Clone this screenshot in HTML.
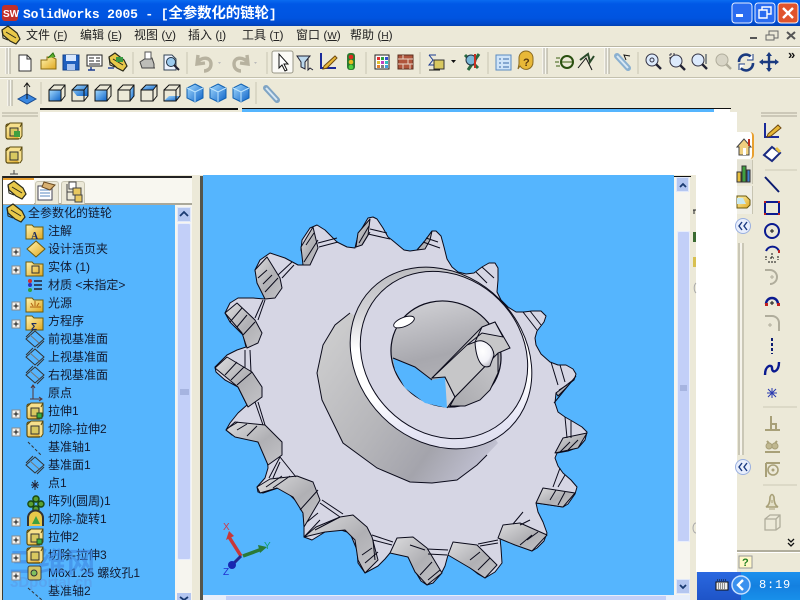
<!DOCTYPE html>
<html lang="zh"><head><meta charset="utf-8"><title>SolidWorks 2005</title>
<style>
html,body{margin:0;padding:0;width:800px;height:600px;overflow:hidden;background:#ece9d8}
body{position:relative;font-family:"Liberation Sans","WenQuanYi Zen Hei","Noto Sans CJK SC",sans-serif}
.a{position:absolute}
.t{position:absolute;font-size:12px;line-height:14px;white-space:nowrap;color:#121a30;font-family:"Liberation Sans","WenQuanYi Zen Hei","Noto Sans CJK SC",sans-serif}
.m{position:absolute;top:28px;font-size:12px;line-height:14px;color:#222;white-space:nowrap;font-family:"Liberation Sans","WenQuanYi Zen Hei","Noto Sans CJK SC",sans-serif}
.m u{font-size:10px}
</style></head><body>

<!-- title bar -->
<div class="a" style="left:0;top:0;width:800px;height:26px;background:linear-gradient(#0a6cf0 0,#0058e6 4px,#0054e0 18px,#0048c8 24px,#0040b0 26px)"></div>
<div class="a" style="left:23px;top:4px;color:#fff;font:bold 13px/17px 'Liberation Mono','WenQuanYi Zen Hei',monospace;letter-spacing:-.15px;white-space:nowrap">SolidWorks 2005 - [<span style="font-family:'WenQuanYi Zen Hei','Noto Sans CJK SC',sans-serif;font-size:14.500px">全参数化的链轮</span>]</div>

<!-- menu -->
<div class="m" style="left:26px">文件 (<u>F</u>)</div>
<div class="m" style="left:80px">编辑 (<u>E</u>)</div>
<div class="m" style="left:134px">视图 (<u>V</u>)</div>
<div class="m" style="left:188px">插入 (<u>I</u>)</div>
<div class="m" style="left:242px">工具 (<u>T</u>)</div>
<div class="m" style="left:296px">窗口 (<u>W</u>)</div>
<div class="m" style="left:350px">帮助 (<u>H</u>)</div>

<!-- toolbar separators -->
<div class="a" style="left:0;top:46px;width:800px;height:1px;background:#b9b6a4"></div>
<div class="a" style="left:0;top:47px;width:800px;height:1px;background:#fff"></div>
<div class="a" style="left:0;top:77px;width:800px;height:1px;background:#c4c1ae"></div>
<div class="a" style="left:0;top:78px;width:800px;height:1px;background:#fbfaf4"></div>

<!-- document area -->
<div class="a" style="left:40px;top:108px;width:198px;height:2px;background:#111"></div>
<div class="a" style="left:242px;top:108px;width:489px;height:1px;background:#111"></div>
<div class="a" style="left:242px;top:109px;width:472px;height:4px;background:#55b5fe"></div>
<div class="a" style="left:714px;top:109px;width:16px;height:4px;background:#fff"></div>
<div class="a" style="left:40px;top:112px;width:697px;height:63px;background:#fff"></div>
<div class="a" style="left:696px;top:175px;width:41px;height:397px;background:#fff"></div>
<div class="a" style="left:690px;top:175px;width:6px;height:397px;background:#ece9d8"></div>
<div class="a" style="left:690px;top:572px;width:7px;height:28px;background:#ece9d8"></div>

<!-- viewport -->
<div class="a" style="left:203px;top:175px;width:471px;height:420px;background:#55b5fe"></div>
<div class="a" style="left:674px;top:176px;width:17px;height:1px;background:#111"></div>
<div class="a" style="left:674px;top:177px;width:16px;height:418px;background:#f6f5ef"></div>
<div class="a" style="left:677px;top:231px;width:13px;height:311px;background:#c2cff8;border-radius:2px;box-shadow:inset 0 0 0 1px #e8eefc"></div>
<div class="a" style="left:676px;top:177px;width:13px;height:15px;background:#b4c6f0;border:1px solid #e0e8fa;box-sizing:border-box"></div>
<div class="a" style="left:676px;top:579px;width:14px;height:15px;background:#b4c6f0;border:1px solid #e0e8fa;box-sizing:border-box"></div>
<div class="a" style="left:203px;top:595px;width:487px;height:5px;background:#e8eefa"></div>
<div class="a" style="left:226px;top:596px;width:440px;height:4px;background:#c2cff8"></div>

<!-- left panel -->
<div class="a" style="left:2px;top:176px;width:194px;height:2px;background:#222"></div>
<div class="a" style="left:2px;top:176px;width:1px;height:424px;background:#3a3a30"></div>
<div class="a" style="left:3px;top:178px;width:191px;height:27px;background:#f8f7f0"></div>
<div class="a" style="left:3px;top:203px;width:191px;height:2px;background:#aaa89a"></div>
<div class="a" style="left:3px;top:178px;width:31px;height:26px;background:#fff;border-top:2px solid #e8a030;box-sizing:border-box"></div>
<div class="a" style="left:35px;top:181px;width:24px;height:23px;background:#ece9d8;border:1px solid #c8c5b2;border-bottom:0;box-sizing:border-box;border-radius:3px 3px 0 0"></div>
<div class="a" style="left:61px;top:181px;width:24px;height:23px;background:#ece9d8;border:1px solid #c8c5b2;border-bottom:0;box-sizing:border-box;border-radius:3px 3px 0 0"></div>
<div class="a" style="left:3px;top:205px;width:172px;height:395px;background:#55b5fe"></div>
<div class="a" style="left:175px;top:205px;width:17px;height:395px;background:#f6f5ef"></div>
<div class="a" style="left:177px;top:223px;width:14px;height:337px;background:#c2cff8;border:1px solid #e8eefc;box-sizing:border-box;border-radius:2px"></div>
<div class="a" style="left:177px;top:207px;width:14px;height:15px;background:#b4c6f0;border:1px solid #e0e8fa;box-sizing:border-box"></div>
<div class="a" style="left:177px;top:593px;width:14px;height:7px;background:#b4c6f0"></div>
<div class="a" style="left:192px;top:176px;width:8px;height:424px;background:#ece9d8"></div>
<div class="a" style="left:200px;top:176px;width:3px;height:424px;background:#55554c"></div>

<!-- tree text -->
<div class="t" style="left:28px;top:206px">全参数化的链轮</div>
<div class="t" style="left:48px;top:224px">注解</div>
<div class="t" style="left:48px;top:242px">设计活页夹</div>
<div class="t" style="left:48px;top:260px">实体 (1)</div>
<div class="t" style="left:48px;top:278px">材质 &lt;未指定&gt;</div>
<div class="t" style="left:48px;top:296px">光源</div>
<div class="t" style="left:48px;top:314px">方程序</div>
<div class="t" style="left:48px;top:332px">前视基准面</div>
<div class="t" style="left:48px;top:350px">上视基准面</div>
<div class="t" style="left:48px;top:368px">右视基准面</div>
<div class="t" style="left:48px;top:386px">原点</div>
<div class="t" style="left:48px;top:404px">拉伸1</div>
<div class="t" style="left:48px;top:422px">切除-拉伸2</div>
<div class="t" style="left:48px;top:440px">基准轴1</div>
<div class="t" style="left:48px;top:458px">基准面1</div>
<div class="t" style="left:48px;top:476px">点1</div>
<div class="t" style="left:48px;top:494px">阵列(圆周)1</div>
<div class="t" style="left:48px;top:512px">切除-旋转1</div>
<div class="t" style="left:48px;top:530px">拉伸2</div>
<div class="t" style="left:48px;top:548px">切除-拉伸3</div>
<div class="t" style="left:48px;top:566px">M6x1.25 螺纹孔1</div>
<div class="t" style="left:48px;top:584px">基准轴2</div>
<div class="a" style="left:9px;top:546px;color:#3f88e2;font:bold 28px/30px 'WenQuanYi Zen Hei','Noto Sans CJK SC',sans-serif;opacity:.6;letter-spacing:1px">三维网</div>
<div class="a" style="left:10px;top:575px;color:#5b9ce8;font:bold 15px/16px 'Liberation Sans',sans-serif;opacity:.6">3Dportal.cn</div>

<!-- right panel -->
<div class="a" style="left:737px;top:132px;width:17px;height:27px;background:#fff;border-right:2px solid #e8a030;box-sizing:border-box;border-radius:0 4px 4px 0"></div>
<div class="a" style="left:737px;top:160px;width:16px;height:24px;background:#e4e2d4;border-right:1px solid #c8c5b2;box-sizing:border-box"></div>
<div class="a" style="left:737px;top:186px;width:16px;height:28px;background:#f0efe6;border-right:1px solid #c8c5b2;box-sizing:border-box"></div>
<div class="a" style="left:737px;top:550px;width:63px;height:2px;background:#b0ad9c"></div>
<div class="a" style="left:737px;top:552px;width:63px;height:1px;background:#fff"></div>

<!-- taskbar -->
<div class="a" style="left:697px;top:572px;width:103px;height:28px;background:linear-gradient(#2a68e0,#1e54c8)"></div>
<div class="a" style="left:741px;top:572px;width:59px;height:28px;background:linear-gradient(#1c90ee,#1480e0 50%,#1890ea)"></div>
<div class="a" style="left:737px;top:553px;width:63px;height:19px;background:#ece9d8"></div>
<div class="a" style="left:759px;top:578px;color:#fff;font:12px/14px 'Liberation Mono',monospace;letter-spacing:.8px">8:19</div>
<div class="a" style="left:788px;top:48px;color:#111;font:bold 13px/13px 'Liberation Sans',sans-serif">»</div>

<svg class="a" style="left:0;top:0" width="800" height="600" viewBox="0 0 800 600">
<defs>
<linearGradient id="fc" x1="0" y1="0" x2="1" y2="1"><stop offset="0" stop-color="#dcdcde"/><stop offset=".55" stop-color="#b0b0b4"/><stop offset="1" stop-color="#c4c4c8"/></linearGradient>
<linearGradient id="hub" gradientUnits="userSpaceOnUse" x1="320" y1="340" x2="505" y2="470"><stop offset="0" stop-color="#cdcdce"/><stop offset=".42" stop-color="#b6b6ba"/><stop offset=".68" stop-color="#a4a4ac"/><stop offset=".88" stop-color="#bcbccc"/><stop offset="1" stop-color="#d6d6e4"/></linearGradient>
<linearGradient id="cres" gradientUnits="userSpaceOnUse" x1="350" y1="310" x2="520" y2="440"><stop offset="0" stop-color="#b8b8bc"/><stop offset=".22" stop-color="#d4d4d8"/><stop offset=".38" stop-color="#fff"/><stop offset=".62" stop-color="#fff"/><stop offset=".8" stop-color="#e6e6f6"/><stop offset="1" stop-color="#d6d6e4"/></linearGradient>
<linearGradient id="bore" x1="0" y1="0" x2="1" y2="1"><stop offset="0" stop-color="#dcdce0"/><stop offset=".5" stop-color="#a8a8ae"/><stop offset="1" stop-color="#c0c0c4"/></linearGradient>
<linearGradient id="bore2" x1="1" y1="0" x2="0" y2="1"><stop offset="0" stop-color="#c8c8cc"/><stop offset="1" stop-color="#a8a8ac"/></linearGradient>
<radialGradient id="wh" cx=".4" cy=".4" r=".7"><stop offset="0" stop-color="#fff"/><stop offset=".6" stop-color="#f2f2f8"/><stop offset="1" stop-color="#aaaab4"/></radialGradient>
<linearGradient id="bl" x1="0" y1="0" x2="1" y2="1"><stop offset="0" stop-color="#a6dcff"/><stop offset="1" stop-color="#0c62c8"/></linearGradient>
<linearGradient id="yl" x1="0" y1="0" x2="1" y2="1"><stop offset="0" stop-color="#fff4b0"/><stop offset="1" stop-color="#e0a820"/></linearGradient>
<g id="cw" fill="none" stroke="#111" stroke-width="1"><path d="M-8 -3H4V8H-8ZM-8 -3L-3 -8H8V3L4 8M4 -3L8 -8"/></g>
<g id="cb"><path d="M0 -9L8 -5V5L0 9L-8 5V-5Z" fill="url(#bl)" stroke="#1060b0"/><path d="M-8 -5L0 -1L8 -5M0 -1V9" fill="none" stroke="#bfe6ff"/></g>
<g id="plus"><rect x="-4" y="-4" width="8" height="8" fill="#f4f4f0" stroke="#8a8a8a"/><path d="M-2.500 0H2.500M0 -2.500V2.500" stroke="#111"/></g>
<g id="plane" fill="none" stroke="#333" stroke-width="1"><path d="M0 -8L9 0L0 8L-9 0Z"/><path d="M-5 -4L4 4" stroke="#777"/><path d="M-2 -9L-9 -2M9 2L2 9" stroke="#333"/></g>
<g id="feat"><rect x="-8" y="-7" width="14" height="15" rx="2" fill="url(#yl)" stroke="#5a4a10" stroke-width="1.200"/><path d="M-8 -4L-4 -8H8V5L6 8M6 -4L8 -8" fill="#f7e08c" stroke="#5a4a10"/><rect x="-4" y="-3" width="8" height="8" fill="#d8c860" stroke="#333"/></g>
<g id="folder"><path d="M-9 -6H-3L-1 -4H8V8H-9Z" fill="url(#yl)" stroke="#6a5a10"/></g>
<g id="part"><path d="M-9 -5L-3 -9L6 -2L9 4L5 9L-1 6L-8 0Z" fill="#e8c84a" stroke="#2a2a1a" stroke-width="1.200"/><path d="M-5 -3L5 3" stroke="#2a2a1a"/><path d="M-9 -5L-8 3L-3 5" fill="none" stroke="#2a2a1a"/></g>
<g id="grip" fill="none"><path d="M0 0V26" stroke="#fff" stroke-width="1"/><path d="M1 0V26M4 0V26" stroke="#a8a594"/><path d="M2.500 0V26" stroke="#f8f8f0" stroke-width="2"/></g>
<g id="xb"><circle r="7.500" fill="#e8eefc" stroke="#9ab0e0"/><path d="M-1 -4L-4 0L-1 4M4 -4L1 0L4 4" fill="none" stroke="#1a3a80" stroke-width="1.400"/></g>
</defs>

<!-- window buttons -->
<rect x="732" y="3" width="20" height="20" rx="3" fill="#2a6cf0" stroke="#e8f0ff"/><rect x="736" y="14" width="7" height="3" fill="#fff"/>
<rect x="755" y="3" width="20" height="20" rx="3" fill="#2a6cf0" stroke="#e8f0ff"/><path d="M762 10V7H771V14H767M759 10H767V18H759Z" fill="none" stroke="#fff" stroke-width="1.400"/>
<rect x="778" y="3" width="20" height="20" rx="3" fill="#e0532c" stroke="#fff0e8"/><path d="M783 8L793 18M793 8L783 18" stroke="#fff" stroke-width="2.400"/>
<path d="M750 38H757" stroke="#555" stroke-width="2"/><path d="M769 35V31H778V38H774M766 35H774V40H766Z" fill="none" stroke="#666"/><path d="M787 32L795 39M795 32L787 39" stroke="#555" stroke-width="2"/>

<!-- app icon -->
<rect x="2" y="5" width="16" height="16" rx="3" fill="#c0302a"/><text x="3" y="17" font-size="10" font-weight="bold" fill="#fff" font-family="Liberation Sans">SW</text>
<use href="#part" x="11" y="35"/>

<!-- toolbar 1 -->
<use href="#grip" x="6" y="48"/>
<path d="M19 55H27L31 59V71H19Z" fill="#fff" stroke="#333"/><path d="M27 55V59H31" fill="none" stroke="#333"/>
<path d="M41 60H47V57H52L56 59V69H41Z" fill="url(#yl)" stroke="#8a6a10"/><path d="M48 58L53 53L55 57" fill="#5cb030" stroke="#2a7010"/>
<rect x="63" y="55" width="16" height="15" fill="#1f5fbe" stroke="#12408a"/><rect x="66" y="55" width="10" height="6" fill="#d8e8ff"/><rect x="67" y="64" width="8" height="6" fill="#a8c4f0"/>
<rect x="87" y="55" width="15" height="11" fill="#fff" stroke="#222"/><path d="M89 58H94M96 58H100M89 61H94M96 61H100M89 64H100" stroke="#222"/><path d="M91 67V70M88 70H95" stroke="#1a3a90" stroke-width="1.400"/>
<use href="#part" x="118" y="62"/><rect x="116" y="57" width="7" height="5" fill="#3a9a40"/><path d="M108 68H114" stroke="#1a3a90" stroke-width="1.400"/>
<path d="M133 52V74" stroke="#c8c5b2"/>
<path d="M140 62L146 58H152L154 64V68H142Z" fill="#bdbdb8" stroke="#444"/><path d="M145 52H151V59H145Z" fill="#fff" stroke="#555"/><path d="M142 68H155" stroke="#444"/>
<path d="M164 55H172L176 59V70H164Z" fill="#eef4ff" stroke="#345"/><circle cx="171" cy="62" r="4.500" fill="#9ccbee" stroke="#234"/><path d="M174 65L179 70" stroke="#223" stroke-width="2"/>
<path d="M187 52V74" stroke="#c8c5b2"/>
<path d="M198 55L197 64L205 63M197 63C202 56 211 57 211 64C211 69 207 71 204 71" fill="none" stroke="#b7b29f" stroke-width="3.400"/><path d="M218 62l3 0-1.500 2z" fill="#bbb"/>
<path d="M247 55L248 64L240 63M248 63C243 56 234 57 234 64C234 69 238 71 241 71" fill="none" stroke="#b7b29f" stroke-width="3.400"/><path d="M254 62l3 0-1.500 2z" fill="#bbb"/>
<path d="M267 52V74" stroke="#c8c5b2"/>
<rect x="272" y="51" width="21" height="22" rx="2" fill="#fbfaf6" stroke="#9a9888"/>
<path d="M279 54V68L282 65L285 71L287 70L284 64H288Z" fill="#fff" stroke="#111"/>
<path d="M297 56H310L305 62V69L301 67V62Z" fill="#bcd8ec" stroke="#223"/><path d="M308 58V70L310 68L313 70" fill="none" stroke="#223"/>
<path d="M321 53V68H336" fill="none" stroke="#1a2a9a" stroke-width="2"/><path d="M324 66L335 56L337 58L327 68L323 69Z" fill="#e8b838" stroke="#704a10"/>
<rect x="347" y="53" width="8" height="17" rx="3" fill="#2a7a30"/><circle cx="351" cy="57" r="2.300" fill="#e02a20"/><circle cx="351" cy="62" r="2.300" fill="#e8b820"/><circle cx="351" cy="67" r="2.300" fill="#50d040"/>
<path d="M366 52V74" stroke="#c8c5b2"/>
<rect x="375" y="55" width="14" height="14" fill="#fff" stroke="#222"/><path d="M377 57h3v3h-3z" fill="#e03030"/><path d="M381 57h3v3h-3z" fill="#30a040"/><path d="M385 57h3v3h-3z" fill="#3050d0"/><path d="M377 61h3v3h-3z" fill="#e0c030"/><path d="M381 61h3v3h-3z" fill="#c040c0"/><path d="M385 61h3v3h-3z" fill="#30c0c0"/><path d="M377 65h3v3h-3z" fill="#e08030"/><path d="M381 65h3v3h-3z" fill="#808080"/><path d="M385 65h3v3h-3z" fill="#40a0e0"/>
<rect x="398" y="55" width="15" height="14" fill="#b0553c" stroke="#5a3020"/><path d="M398 59H413M398 64H413M403 55V59M408 59V64M403 64V69M410 64V69" stroke="#e8d8c8"/>
<path d="M420 52V74" stroke="#c8c5b2"/>
<path d="M429 55H436M429 55L433 60L429 65H436" fill="none" stroke="#1a3a90"/><rect x="434" y="60" width="10" height="9" fill="#d8c860" stroke="#333"/><path d="M429 70H440" stroke="#111"/><path d="M451 60l5 0-2.500 3z" fill="#111"/>
<path d="M465 55L478 68M479 54L468 70" stroke="#2a6a40" stroke-width="3"/><circle cx="471" cy="60" r="5" fill="#7ab8d8" stroke="#234"/><path d="M475 54V68" stroke="#c83020" stroke-width="2"/>
<path d="M488 52V74" stroke="#c8c5b2"/>
<rect x="496" y="55" width="15" height="15" fill="#cfe4f8" stroke="#5a8ac0"/><path d="M499 59h2M503 59h6M499 63h2M503 63h6M499 67h2M503 67h6" stroke="#3a6aa8"/>
<path d="M519 58A7 7 0 0 1 533 58V62A7 7 0 0 1 520 66L518 69L519 64Z" fill="#e8b838" stroke="#8a6a20"/><text x="523" y="66" font-size="11" font-weight="bold" fill="#5a3a10" font-family="Liberation Sans">?</text>
<use href="#grip" x="543" y="48"/>
<circle cx="567" cy="62" r="6" fill="none" stroke="#2a5010" stroke-width="2"/><path d="M556 58h4M555 62h4M556 66h4M562 62h10" stroke="#3a6010"/><path d="M580 60L588 54L590 62L594 56" fill="none" stroke="#2a4a2a" stroke-width="2"/><path d="M578 68L586 58L592 70" fill="none" stroke="#111"/>
<use href="#grip" x="605" y="48"/>
<path d="M617 56L628 68" stroke="#8ab0d0" stroke-width="6" stroke-linecap="round"/><path d="M617 56L628 68" stroke="#d8e8f4" stroke-width="2"/><path d="M630 56L624 55L626 60" fill="none" stroke="#111"/>
<path d="M638 52V74" stroke="#c8c5b2"/>
<circle cx="652" cy="60" r="6" fill="#dceafc" stroke="#334"/><circle cx="652" cy="60" r="2" fill="none" stroke="#334"/><path d="M656 64L661 69" stroke="#223" stroke-width="2.400"/>
<circle cx="676" cy="61" r="6" fill="#dceafc" stroke="#334"/><path d="M670 54h6M670 54v6" stroke="#334" stroke-dasharray="2 1"/><path d="M680 65L685 70" stroke="#223" stroke-width="2.400"/>
<circle cx="698" cy="60" r="6" fill="#dceafc" stroke="#334"/><path d="M702 64L707 69" stroke="#223" stroke-width="2.400"/><path d="M706 54V64" stroke="#234"/>
<circle cx="722" cy="60" r="6" fill="#d8d5c6" stroke="#b0ad9c"/><path d="M726 64L731 69" stroke="#b0ad9c" stroke-width="2.400"/>
<path d="M739 62A7 7 0 0 1 752 58M753 63A7 7 0 0 1 740 67" fill="none" stroke="#1a3a80" stroke-width="2.600"/><path d="M753 54V60H747M739 70V64H745" fill="#fff" stroke="#1a3a80"/>
<path d="M769 54V71M761 62H777" stroke="#1a3a80" stroke-width="2.400"/><path d="M769 52l-3 4h6zM769 72l-3 -4h6zM759 62l4 -3v6zM779 62l-4 -3v6z" fill="#1a3a80"/>

<!-- toolbar 2 -->
<use href="#grip" x="8" y="80"/>
<path d="M18 99L27 94L36 99L27 104Z" fill="#3a88e0" stroke="#174a90"/><path d="M27 84V99M24 87l3 -4l3 4" fill="none" stroke="#111"/>
<path d="M41 82V104" stroke="#c8c5b2"/>
<g transform="translate(57 93)"><rect x="-8" y="-3" width="12" height="11" fill="url(#bl)"/><use href="#cw"/></g>
<g transform="translate(80 93)"><path d="M-8 -3L-3 -8H8V3H-3Z" fill="url(#bl)"/><use href="#cw"/></g>
<g transform="translate(103 93)"><path d="M-8 -3H4V8H-8Z" fill="url(#bl)"/><use href="#cw"/></g>
<g transform="translate(126 93)"><path d="M4 -3L8 -8V3L4 8Z" fill="url(#bl)"/><use href="#cw"/></g>
<g transform="translate(149 93)"><path d="M-8 -3L-3 -8H8L4 -3Z" fill="url(#bl)"/><use href="#cw"/></g>
<g transform="translate(172 93)"><path d="M-8 8L-3 3H8L4 8Z" fill="url(#bl)"/><use href="#cw"/></g>
<use href="#cb" x="195" y="93"/><use href="#cb" x="218" y="93"/><use href="#cb" x="241" y="93"/>
<path d="M256 82V104" stroke="#c8c5b2"/>
<path d="M266 88L277 100" stroke="#7fa4c4" stroke-width="6" stroke-linecap="round"/><path d="M266 88L277 100" stroke="#d8e8f4" stroke-width="2"/>

<!-- left strip -->
<path d="M2 113H38M2 116H38" stroke="#b0ad9c"/>
<use href="#feat" x="14" y="131"/><rect x="14" y="131" width="6" height="6" fill="#40a040"/>
<use href="#feat" x="14" y="155"/>
<path d="M14 170V174M10 174H18" stroke="#444"/>

<!-- panel tabs -->
<use href="#part" x="17" y="190"/>
<path d="M38 186H52V200H38Z" fill="#fff" stroke="#445"/><path d="M40 190H50M40 193H50M40 196H50" stroke="#5a8ac0"/><path d="M44 182L55 185L50 190L42 187Z" fill="#d8b070" stroke="#6a4a20"/>
<path d="M67 184V200H75M67 192H75" fill="none" stroke="#444"/><rect x="69" y="182" width="7" height="7" fill="#fff" stroke="#444"/><rect x="73" y="188" width="8" height="7" fill="#e8c860" stroke="#444"/><rect x="75" y="195" width="7" height="7" fill="#e8c860" stroke="#444"/>

<!-- tree icons -->
<use href="#part" x="16" y="213"/>
<use href="#folder" x="35" y="231"/><text x="31" y="239" font-size="10" font-weight="bold" fill="#1a2a60" font-family="Liberation Serif">A</text>
<path d="M36 241L45 249L36 257L27 249Z" fill="url(#yl)" stroke="#6a5a10"/>
<use href="#folder" x="35" y="268"/><rect x="32" y="266" width="7" height="7" fill="none" stroke="#333"/>
<circle cx="30" cy="281" r="2" fill="#d03030"/><circle cx="30" cy="285" r="2" fill="#3030c0"/><circle cx="30" cy="290" r="2" fill="#30a040"/><path d="M34 281H42M34 285H42M34 289H42" stroke="#223" stroke-width="1.400"/>
<use href="#folder" x="35" y="304"/><path d="M30 307L41 307M35 301V306M31 303L33 306M39 303L37 306" stroke="#b06010"/>
<use href="#folder" x="35" y="322"/><text x="31" y="330" font-size="10" font-weight="bold" fill="#1a2a60" font-family="Liberation Sans">Σ</text>
<use href="#plane" x="35" y="339"/><use href="#plane" x="35" y="357"/><use href="#plane" x="35" y="375"/>
<path d="M33 385V399H42M31 388L33 385L35 388M39 397L42 399L39 401M30 399L36 399" fill="none" stroke="#533" stroke-width="1"/>
<use href="#feat" x="35" y="411"/><rect x="37" y="413" width="5" height="5" fill="#40b040" stroke="#205020"/>
<use href="#feat" x="35" y="429"/>
<path d="M28 442L42 456" stroke="#333" stroke-dasharray="3 2"/>
<use href="#plane" x="35" y="465"/>
<path d="M31 485H39M35 480V490M32 482L38 488M38 482L32 488" stroke="#223"/>
<path d="M36 496a3 3 0 1 1 -.1 0zM36 506a3 3 0 1 1 -.1 0zM31 501a3 3 0 1 1 -.1 0zM41 501a3 3 0 1 1 -.1 0z" fill="#5aa030" stroke="#1a4a10" stroke-width="1.400"/>
<path d="M28 526V518A7 7 0 0 1 43 518V526" fill="#e8c84a" stroke="#333" stroke-width="2"/><path d="M32 524L36 516L40 524Z" fill="#40a040"/>
<use href="#feat" x="35" y="537"/><rect x="37" y="539" width="5" height="5" fill="#40b040" stroke="#205020"/>
<use href="#feat" x="35" y="555"/>
<rect x="28" y="566" width="13" height="14" rx="2" fill="#e8c84a" stroke="#333" opacity=".85"/><circle cx="34" cy="573" r="3" fill="#80c060" stroke="#333"/>
<path d="M28 588L42 600" stroke="#333" stroke-dasharray="3 2"/>
<use href="#plus" x="16" y="252"/><use href="#plus" x="16" y="270"/><use href="#plus" x="16" y="306"/><use href="#plus" x="16" y="324"/><use href="#plus" x="16" y="414"/><use href="#plus" x="16" y="432"/><use href="#plus" x="16" y="522"/><use href="#plus" x="16" y="540"/><use href="#plus" x="16" y="558"/><use href="#plus" x="16" y="576"/>
<path d="M180 216L184 212L188 216" fill="none" stroke="#1a3a70" stroke-width="1.800"/>
<path d="M180 597L184 600L188 597" fill="none" stroke="#1a3a70" stroke-width="1.800"/>
<path d="M680 187L683 184L686 187" fill="none" stroke="#1a3a70" stroke-width="1.800"/>
<path d="M680 585L683 588L686 585" fill="none" stroke="#1a3a70" stroke-width="1.800"/>
<path d="M180 390H189M180 392H189M180 394H189M680 386H687M680 388H687M680 390H687" stroke="#8a9ac8"/>

<!-- GEAR -->
<polygon fill="#d6d6e4" stroke="#0a0a1a" stroke-width="1" stroke-linejoin="round" points="373,217 377,219 383,228 388,237 392,240 398,245 404,250 410,251 417,250 424,242 432,231 436,231 441,236 444,247 447,259 452,267 458,272 466,274 474,273 482,267 489,263 495,263 498,268 498,280 497,292 501,300 508,307 516,312 524,312 532,311 541,311 546,316 544,322 537,331 535,338 536,345 541,354 550,362 558,365 566,365 573,369 576,374 574,380 566,386 556,393 555,403 558,412 565,417 572,421 582,427 587,432 585,440 579,447 568,451 557,453 555,458 558,466 563,473 571,480 577,487 575,494 568,504 563,507 550,505 536,503 538,512 543,522 547,533 544,541 537,548 532,551 520,546 510,541 500,538 501,548 502,563 495,572 485,578 478,574 468,566 458,558 448,555 445,566 441,574 433,583 427,585 421,581 415,571 409,558 403,553 390,553 385,559 378,566 365,573 358,563 357,550 350,533 338,529 325,532 312,540 304,537 304,523 303,513 298,503 290,495 278,488 263,493 258,492 257,487 265,478 268,468 267,453 258,442 245,437 232,435 226,430 230,423 238,413 247,405 238,387 225,380 216,372 215,367 227,355 237,350 246,347 243,335 230,322 225,313 230,303 238,298 253,298 265,299 258,283 255,270 260,260 270,253 285,258 298,265 305,265 301,250 302,240 310,228 317,225 325,230 337,242 347,247 355,248 358,235 368,218"/>
<g stroke="#0a0a1a" stroke-width="1" fill="url(#fc)" stroke-linejoin="round">
<path d="M356 247L358 233L370 219L368 235L362 245Z"/>
<path d="M301 247L313 227L318 248L310 265L303 265Z"/>
<path d="M255 270L267 257L280 278L282 288L275 298L265 299L257 283Z"/>
<path d="M225 313L237 303L255 320L262 333L258 343L247 348L242 333Z"/>
<path d="M215 368L227 357L252 372L262 387L262 397L248 407L238 387Z"/>
<path d="M226 430L235 422L265 425L282 442L282 455L268 465L258 442L235 437Z"/>
<path d="M257 487L270 479L297 476L313 482L320 500L304 527L303 513L293 497L277 488L260 493Z"/>
<path d="M304 537L316 527L340 517L353 515L367 527L372 537L378 560L365 573L358 560L355 540L345 530L325 532Z"/>
<path d="M390 553L397 538L413 537L427 548L442 573L427 585L415 572L408 557Z"/>
<path d="M448 555L453 542L477 545L497 565L485 578L470 568Z"/>
<path d="M498 538L503 525L520 523L547 535L532 551L515 545Z"/>
<path d="M536 503L543 488L575 493L563 507Z"/>
<path d="M555 453L563 438L587 433L578 448Z"/>
<path d="M417 250L424 242L432 231L430 240L425 249Z"/>
<path d="M556 393L573 380L566 388L558 396Z"/>
</g>
<g stroke="#0a0a1a" stroke-width="1" fill="none">
<path d="M423 242L440 248M426 238L438 242"/>
<path d="M368 234L390 239M370 229L387 233M359 243L369 226M362 245L370 232"/>
<path d="M318 243L337 238M319 247L338 242M304 262L318 240M306 245L314 233"/>
<path d="M278 275L292 262M282 278L294 265M258 278L267 270M265 292L278 278M263 284L272 275"/>
<path d="M255 318L263 300M258 320L265 300M230 322L242 308M237 327L247 315M243 335L255 322"/>
<path d="M245 350V368M250 350L251 372M225 375L237 362M231 380L244 367M237 385L252 372"/>
<path d="M255 402L263 425M258 402L265 425M228 428L238 422M237 430L247 424M247 436L257 426"/>
<path d="M269 478L280 457L296 477M273 478L280 462M266 487L282 476M273 488L290 476M300 510L318 490"/>
<path d="M320 503L340 517M322 500L343 514M307 522L318 513M304 537L320 520M315 530L340 517"/>
<path d="M372 535L393 542M373 540L392 545M373 540L375 560M362 555L372 548M365 563L378 552"/>
<path d="M427 549L448 550M428 554L447 555M410 545L425 550M420 575L432 562M428 580L440 570"/>
<path d="M478 544L498 540M480 546L498 543M470 560L480 552M478 570L490 558"/>
<path d="M523 512L513 524M530 520L520 525M527 540L538 532M520 545L532 535"/>
<path d="M560 468L553 487M565 475L558 487M550 500L556 490M558 505L565 492"/>
<path d="M565 417L567 438M571 421L571 438M560 452L570 442M568 450L578 440"/>
<path d="M476 272L487 283M482 267L494 278M523 312L537 330M530 311L541 325M551 362L558 385M560 365L565 382"/>
<path d="M559 390L567 385M554 403L576 376"/>
</g>

<!-- hub cylinder -->
<path d="M350 313L335 325L323 345L317 373L322 400L343 443L377 468L410 482L432 483L457 480L477 465L498 443L440 360Z" fill="url(#hub)" stroke="none"/>
<path d="M350 313L335 325L323 345L317 373L322 400L343 443L377 468L410 482L432 483L457 480L477 465L487 455" fill="none" stroke="#0a0a1a"/>
<ellipse cx="441" cy="358" rx="98" ry="83" transform="rotate(45 441 358)" fill="url(#cres)" stroke="#0a0a1a" stroke-width="1"/>
<ellipse cx="444" cy="355" rx="89" ry="78" transform="rotate(45 444 355)" fill="#d6d6e4" stroke="#0a0a1a" stroke-width="1"/>
<ellipse cx="446" cy="354" rx="56" ry="52" transform="rotate(30 446 354)" fill="url(#bore)" stroke="#0a0a1a" stroke-width="1.200"/>
<path d="M393 358L415 367L432 380L445 377L455 397L447 408L425 403L405 388L395 370Z" fill="#55b5fe"/>
<path d="M393 358L415 367L432 380" fill="none" stroke="#0a0a1a"/>
<path d="M445 377L455 397L447 408" fill="#d0d0d4" stroke="#0a0a1a"/>
<path d="M498 353L498 373L490 390L480 400L465 406L450 406L455 397Z" fill="url(#bore2)" stroke="#0a0a1a"/>
<path d="M432 378L482 327L495 322L510 348L498 353L455 397L445 377Z" fill="#c6c6c8" stroke="#0a0a1a"/>
<path d="M432 378L467 345L475 342L482 327L495 322L503 337L482 333L467 345" fill="#d4d4de" stroke="#0a0a1a"/>
<path d="M475 342C483 338 493 345 494 355L490 366C482 370 476 360 475 342Z" fill="url(#wh)" stroke="#0a0a1a"/>
<ellipse cx="404" cy="322" rx="11" ry="4.500" transform="rotate(-22 404 322)" fill="#fff" stroke="#0a0a1a" stroke-width=".9"/>

<!-- triad -->
<path d="M241 556L229 537" stroke="#c83838" stroke-width="3.500"/><path d="M229 531L226 540L234 536Z" fill="#c83838"/>
<path d="M243 556L262 549" stroke="#2a7a38" stroke-width="3.500"/><path d="M267 547L258 545L260 553Z" fill="#2a7a38"/>
<path d="M241 556L233 564" stroke="#222a90" stroke-width="3"/><circle cx="232" cy="565" r="4" fill="#1828b0"/>
<text x="223" y="530" font-size="10" fill="#d03848" font-family="Liberation Sans">X</text>
<text x="264" y="549" font-size="10" fill="#10a070" font-family="Liberation Sans">Y</text>
<text x="223" y="575" font-size="10" fill="#2030d0" font-family="Liberation Sans">Z</text>

<!-- strip next to viewport -->
<path d="M694 210V214M693 210H696" stroke="#222"/><rect x="693" y="232" width="3" height="10" fill="#3a6a30"/><rect x="693" y="257" width="3" height="10" fill="#d8c050"/><path d="M696 283A4 6 0 0 0 696 293" fill="none" stroke="#aaa"/>
<path d="M696 523A3 5 0 0 0 696 533" fill="none" stroke="#aaa"/>

<!-- right tabs -->
<path d="M737 147L744 139L751 147H749V155H739V147Z" fill="#f0d080" stroke="#444"/><rect x="743" y="148" width="3" height="7" fill="#fff"/><path d="M749 139V146" stroke="#c03020" stroke-width="2"/>
<rect x="737" y="172" width="4" height="10" fill="#e8c040" stroke="#333"/><rect x="742" y="166" width="4" height="16" fill="#40a040" stroke="#333"/><rect x="747" y="170" width="3" height="12" fill="#4080d0" stroke="#333"/>
<path d="M737 196H746L750 200V205L747 208H737Z" fill="url(#yl)" stroke="#6a5a10"/><path d="M737 198H743L746 204H737Z" fill="#c8e8f0"/>
<use href="#xb" x="743" y="226"/><use href="#xb" x="743" y="467"/>
<path d="M739 243V455M743 243V455" stroke="#a8a594"/><path d="M741 243V455" stroke="#fff"/>

<!-- right strip icons -->
<path d="M761 113H797M761 116H797" stroke="#aba898"/>
<path d="M765 123V137H779" fill="none" stroke="#1a2a9a" stroke-width="2"/><path d="M768 134L778 125L781 128L771 136L767 137Z" fill="#e8b838" stroke="#704a10"/>
<path d="M772 147L780 153L772 161L764 155Z" fill="#fff" stroke="#1a2a80" stroke-width="2"/><path d="M777 147L781 151L779 153L775 149Z" fill="#e8c040"/>
<path d="M765 170H797" stroke="#ccc9b6"/>
<path d="M765 177L779 192" stroke="#0a1a70" stroke-width="2"/>
<rect x="765" y="202" width="14" height="12" fill="none" stroke="#0a1a90" stroke-width="2"/><path d="M764 201h2v2h-2zM778 201h2v2h-2zM764 213h2v2h-2zM778 213h2v2h-2z" fill="#c02020"/>
<circle cx="772" cy="231" r="7" fill="none" stroke="#0a1a90" stroke-width="2"/><path d="M770 231H774M772 229V233" stroke="#111"/>
<path d="M766 251A7 7 0 0 1 779 251" fill="none" stroke="#0a1a90" stroke-width="2"/><path d="M766 256V260M770 258H774M772 253V258M778 256V260M768 262H776" stroke="#111" stroke-dasharray="2 1"/><rect x="778" y="250" width="2" height="3" fill="#c02020"/>
<path d="M765 270H770A7 7 0 1 1 770 284" fill="none" stroke="#b0ad9c" stroke-width="2"/><path d="M770 277H774M772 275V279" stroke="#b0ad9c"/>
<path d="M766 304A6 6 0 0 1 778 304" fill="none" stroke="#0a1a90" stroke-width="2.400"/><path d="M770 303H774M772 301V305" stroke="#111"/><path d="M765 303h3v3h-3zM777 303h3v3h-3z" fill="#c02020"/>
<path d="M765 316H772A7 7 0 0 1 779 323V331" fill="none" stroke="#b0ad9c" stroke-width="2"/><path d="M768 325H772M770 323V327" stroke="#b0ad9c"/>
<path d="M772 338V354" stroke="#0a1a70" stroke-width="2" stroke-dasharray="3 2"/>
<path d="M765 375C765 365 772 364 772 368C772 374 779 372 779 362" fill="none" stroke="#0a1a90" stroke-width="2.400"/>
<path d="M767 393H777M772 388V398M768 389L776 397M776 389L768 397" stroke="#2a3ab0"/>
<path d="M763 407H797M763 485H797" stroke="#ccc9b6"/>
<path d="M765 430H780M771 416V430M771 424H776V430" fill="none" stroke="#a8a078" stroke-width="2"/>
<path d="M767 441L772 447L777 441M765 452H780" fill="none" stroke="#a8a078" stroke-width="2"/><circle cx="769" cy="446" r="3" fill="#c0b890" stroke="#a8a078"/><circle cx="775" cy="446" r="3" fill="#c0b890" stroke="#a8a078"/>
<path d="M766 463V477M766 463H780M780 470" fill="none" stroke="#a8a078" stroke-width="2"/><circle cx="773" cy="470" r="5" fill="none" stroke="#a8a078" stroke-width="1.600"/><circle cx="773" cy="470" r="1.500" fill="#a8a078"/>
<path d="M766 507Q770 505 770 497Q772 492 774 497Q774 505 778 507Z" fill="#e4e0c8" stroke="#a8a078" stroke-width="1.600"/><path d="M772 500V503M769 509H775" stroke="#a8a078"/>
<path d="M765 519L770 515H780V527L776 530H765ZM765 519H776V530M776 519L780 515" fill="#ece9d8" stroke="#b0ad9c" stroke-width="1.300"/>
<path d="M788 539L791 542L794 539M788 543L791 546L794 543" fill="none" stroke="#111" stroke-width="1.300"/>

<rect x="739" y="556" width="13" height="12" fill="#fff8c8" stroke="#999"/><text x="742" y="566" font-size="11" font-weight="bold" fill="#208020" font-family="Liberation Sans">?</text>

<!-- tray -->
<rect x="716" y="582" width="12" height="8" fill="#eee" stroke="#111"/><path d="M717 580H727" stroke="#111" stroke-dasharray="1 1"/><path d="M718 584H726M718 586H726M718 588H726" stroke="#333" stroke-dasharray="1 1"/>
<circle cx="741" cy="585" r="9" fill="#3a90ee" stroke="#c8e0ff" stroke-width="1.500"/><path d="M743 580L738 585L743 590" fill="none" stroke="#fff" stroke-width="2.400"/>
</svg>
</body></html>
